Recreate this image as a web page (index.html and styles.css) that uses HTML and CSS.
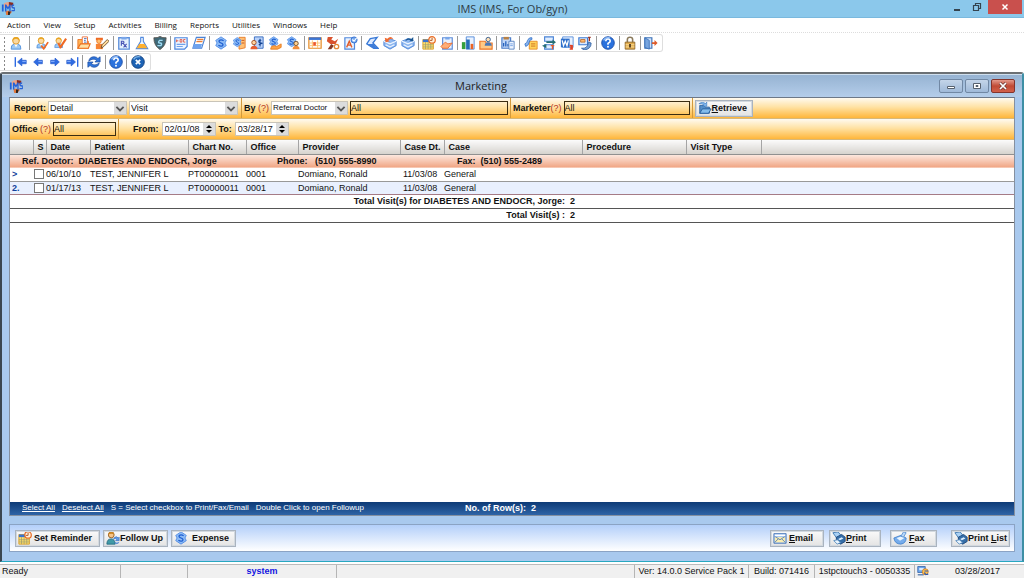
FILE: index.html
```html
<!DOCTYPE html>
<html lang="en">
<head>
<meta charset="utf-8">
<title>IMS (IMS, For Ob/gyn)</title>
<link rel="stylesheet" href="styles.css">
</head>
<body>
<svg class="sprite" aria-hidden="true">
  <symbol id="logo" viewBox="0 0 16 16"><path d="M3 3q5-4 10 0l-1 5q-4-2-8 0z" fill="#e9a58a"/><path d="M9 1l5 1v3h-5z" fill="#8a2d20"/><path d="M5 11h7v2l-3 3H6z" fill="#e0763a"/><path d="M8 12h3l-1 4H8z" fill="#30251e"/><path d="M1 4h2v8H1zM4.500 12V4h1.500l2 3 1.500-3H11v8H9.500V7.500L8 10 6.200 7.500V12z" fill="#2462d8"/><path d="M15 5q-2.500-1-2.500 1t2.500 2 0 3h-3" fill="none" stroke="#2462d8" stroke-width="1.500"/></symbol>
  <symbol id="person" viewBox="0 0 16 16"><path d="M2.500 15q-.5-5 3-5.500h5q3.500.5 3 5.500z" fill="#9cc9f5" stroke="#4f8fdc"/><path d="M6 9h4l-2 4z" fill="#fff"/><circle cx="8" cy="5.500" r="3.800" fill="#fbd9a0" stroke="#d39022"/><path d="M4 6q-.5-5 4-5t4 5q-1-3-4-3T4 6z" fill="#e9a420"/></symbol>
  <symbol id="person-check" viewBox="0 0 16 16"><use href="#person" width="14" height="15"/><path d="M7 11l3 3.500L15 7" fill="none" stroke="#ef6a25" stroke-width="2"/></symbol>
  <symbol id="person-edit" viewBox="0 0 16 16"><use href="#person" width="13" height="15"/><path d="M8 13.500L15 3M6 8l3 6" fill="none" stroke="#ef6a25" stroke-width="2.400"/></symbol>
  <symbol id="folder" viewBox="0 0 16 16"><path d="M1 4h5l1 2h6v8H1z" fill="#ffb455" stroke="#ea7120"/><path d="M6 1h6v8H6z" fill="#fff" stroke="#ec6b35"/><path d="M8 3h3M8 5h2M8 7h3" stroke="#3c66ae"/><path d="M4 9h11l-2 5H1z" fill="#ffe0a5" stroke="#ea7120" stroke-width="1.300"/></symbol>
  <symbol id="person-pencil" viewBox="0 0 16 16"><path d="M1 2h8v3H1z" fill="#ee6a25"/><circle cx="4.500" cy="6" r="2.500" fill="#ffc070" stroke="#ea7120"/><path d="M1 15V9h8v6z" fill="#f78435"/><path d="M7 14l1-4 6-6 2 2-6 6z" fill="#ffdc9c" stroke="#6c4a26"/></symbol>
  <symbol id="rx" viewBox="0 0 16 16"><path d="M2 2h12v13H2z" fill="#e5f0fd" stroke="#5d8fdb" stroke-width="1.500"/><path d="M5 1h6v3H5z" fill="#7aa7ea"/><path d="M5 11V6h2q2 1 0 2.500H5M7 8.500l4 4.500M11 9l-3.500 4" fill="none" stroke="#4a55b5" stroke-width="1.300"/></symbol>
  <symbol id="flask" viewBox="0 0 16 16"><path d="M6 1.500h4M6.500 2v4L1.500 14.500h13L9.500 6V2" fill="#eef6ff" stroke="#528ade" stroke-width="1.300"/><path d="M5 9h6l3 5H2z" fill="#ffb02e"/></symbol>
  <symbol id="shield" viewBox="0 0 16 16"><path d="M8 .5q3 2 7 1.500 0 9-7 13.500Q1 11 1 2q4 .5 7-1.500z" fill="#3e6877" stroke="#54504c"/><path d="M11 5H7.500Q5 8 8 8t1 3H5" fill="none" stroke="#9fdcf5" stroke-width="1.700"/></symbol>
  <symbol id="doc-text" viewBox="0 0 16 16"><path d="M1 2h14v10l-3 3H1z" fill="#eef5ff" stroke="#4c86df" stroke-width="1.400"/><path d="M3 4v3M3 5.500h2M7 4v3h2V4zM13 4h-2v3h2" fill="none" stroke="#df5340"/><path d="M3 9.500h10M3 12h7" stroke="#72a2ea" stroke-width="1.300"/></symbol>
  <symbol id="eraser" viewBox="0 0 16 16"><path d="M5 1.500h10L11 14H1z" fill="#fff" stroke="#4b83d5" stroke-width="1.300"/><path d="M6 4h7M5 6.500h7" stroke="#ea7f35" stroke-width="1.500"/><path d="M2 9h9.500L10 14H1z" fill="#6ea3ee"/></symbol>
  <symbol id="dollar" viewBox="0 0 16 16"><path d="M8 1l6 4-1.500 3L14 11l-6 4-6-4 1.500-3L2 5z" fill="#8ebcf6" stroke="#4a88e4"/><path d="M11 5.500Q8 3.500 6 5.200 5 7 8 8t2 2.800Q8 12.500 5 10.500" fill="none" stroke="#1f5fd0" stroke-width="1.500"/></symbol>
  <symbol id="dollar-note" viewBox="0 0 16 16"><path d="M8 1.500h7v12l-7 1.500z" fill="#ffc075" stroke="#e77a27"/><path d="M11 5h3M11 8h3" stroke="#c54f15"/><use href="#dollar" width="12" height="14"/></symbol>
  <symbol id="person-doc" viewBox="0 0 16 16"><path d="M5 1h10v13H5z" fill="#b9d2fa" stroke="#2f65bd"/><path d="M13 5q-3-1-3 1t3 2-3 2M11.500 3v9" fill="none" stroke="#164492" stroke-width="1.200"/><circle cx="4.500" cy="7.500" r="2.500" fill="#ffd4a0" stroke="#a1491d"/><path d="M.5 15q0-4 4-4t4 4z" fill="#e65e31"/></symbol>
  <symbol id="dollar-hand" viewBox="0 0 16 16"><use href="#dollar" width="13" height="13"/><path d="M4 12q3-2 6 0l5-3v4l-4 2H3z" fill="#ffa445" stroke="#e57c1f"/></symbol>
  <symbol id="dollar-person" viewBox="0 0 16 16"><use href="#dollar" width="13" height="13"/><circle cx="11.500" cy="8.500" r="2.500" fill="#ffcf8d" stroke="#664323"/><path d="M7.500 15q0-4 4-4t4 4z" fill="#ef8d3c"/></symbol>
  <symbol id="calendar" viewBox="0 0 16 16"><path d="M1 2h14v12H1z" fill="#fff" stroke="#e68b24" stroke-width="1.400"/><path d="M1 1.500h14v3H1z" fill="#3b74d3"/><path d="M2 8h12M2 11h12M5 5v9M11 5v9" stroke="#ffc06a"/><path d="M6 7h3v4H6z" fill="#ed562e"/></symbol>
  <symbol id="people-tool" viewBox="0 0 16 16"><path d="M2 1h6l-2 3 4 2 4-3-3 6H5L1 6z" fill="#d9522d"/><path d="M2 15l4-6 3 2-3 4z" fill="#863925"/><circle cx="12" cy="12" r="2.500" fill="#fff" stroke="#e38736" stroke-width="1.500"/></symbol>
  <symbol id="doc-a" viewBox="0 0 16 16"><path d="M1 2h11v13H1z" fill="#e9f2ff" stroke="#5188db" stroke-width="1.400"/><path d="M3 13l3-7 3 7M4 10.500h4" fill="none" stroke="#e15b27" stroke-width="1.500"/><circle cx="11.500" cy="4.500" r="3.500" fill="#75a8ed" stroke="#336fcf"/><path d="M9.500 4l2 2 3-4" fill="none" stroke="#fff" stroke-width="1.300"/></symbol>
  <symbol id="scanner" viewBox="0 0 16 16"><path d="M14 1.500L6 3 2 9l8 5h5L9 8z" fill="#dceaff" stroke="#3979d6" stroke-width="1.500"/><path d="M2 9h8l4 5h-4z" fill="#3d7cd9"/></symbol>
  <symbol id="box-in" viewBox="0 0 16 16"><path d="M1 6l7-3 7 3v5l-7 4-7-4z" fill="#8fb8f0" stroke="#4a84d8"/><path d="M1 6l7 3 7-3M3 10l5 2.500 5-2.500" fill="none" stroke="#eef5ff" stroke-width="1.400"/><path d="M2 2l1 5 5-1-2-1q3-3 6-1Q9-1 5 3z" fill="#f06a30"/></symbol>
  <symbol id="box-out" viewBox="0 0 16 16"><path d="M1 6l7-3 7 3v5l-7 4-7-4z" fill="#8fb8f0" stroke="#4a84d8"/><path d="M1 6l7 3 7-3M3 10l5 2.500 5-2.500" fill="none" stroke="#eef5ff" stroke-width="1.400"/><path d="M14 1v5H9l2-1Q8 3 5 6q1-5 7-3z" fill="#1b5794"/></symbol>
  <symbol id="reminder" viewBox="0 0 16 16"><path d="M1 4h12v11H1z" fill="#ffe06b" stroke="#d89b26"/><path d="M1 4h12v3H1z" fill="#3974d0"/><path d="M1 10h12M1 12.500h12M4 7v8M7 7v8M10 7v8" stroke="#9a9a70" stroke-width=".8"/><circle cx="11.500" cy="4.500" r="3.700" fill="#fff0da" stroke="#ea6b24" stroke-width="1.400"/><path d="M11.500 2v3H9" fill="none" stroke="#a94a18"/></symbol>
  <symbol id="clipboard-hand" viewBox="0 0 16 16"><path d="M3 2h11v13H3z" fill="#e8f1ff" stroke="#628fd8" stroke-width="1.400"/><path d="M6 1h5v3H6z" fill="#79a6e8"/><path d="M1 12l5-5 3 2 5-1-5 6H3z" fill="#ffae78" stroke="#ea6c2c"/></symbol>
  <symbol id="chart" viewBox="0 0 16 16"><path d="M6 1h9v14H6z" fill="#eaf2ff" stroke="#4d86d8"/><path d="M1 7h4v8H1z" fill="#35a03d"/><path d="M6 4h4v11H6z" fill="#246eb7"/><path d="M11 9h3v6h-3z" fill="#ea6428"/></symbol>
  <symbol id="folder-person" viewBox="0 0 16 16"><path d="M1 6h6l1 2h7v7H1z" fill="#ffc985" stroke="#eb7728" stroke-width="1.300"/><circle cx="10.500" cy="4" r="2.500" fill="#ffe0b7" stroke="#2b5588"/><path d="M6.500 11q0-4 4-4t4 4z" fill="#4b78b5"/></symbol>
  <symbol id="report" viewBox="0 0 16 16"><path d="M1 2h10v12H1z" fill="#c0d6f6" stroke="#4b7cc8" stroke-width="1.300"/><path d="M3 1h6v3H3z" fill="#b98145"/><path d="M3 12V8M5.500 12V6M8 12V9" stroke="#2561bd" stroke-width="1.500"/><path d="M9 6h6v9H9z" fill="#edf4ff" stroke="#527fbe"/><path d="M10.500 9h3M10.500 11h3" stroke="#6c9ce2"/></symbol>
  <symbol id="note-link" viewBox="0 0 16 16"><path d="M6 6h9v9H6z" fill="#ffd35b" stroke="#e68a22"/><path d="M8 9h5M8 11.500h5" stroke="#c96d1c"/><path d="M1 9q3-1 3-4Q6 1 9 2v2Q6 4 6 7t-4 5z" fill="#8cb7ef" stroke="#3975c9"/></symbol>
  <symbol id="transfer" viewBox="0 0 16 16"><path d="M3 1h10v5H3zM3 10h10v5H3z" fill="#e0edff" stroke="#4983d5" stroke-width="1.300"/><path d="M5 6h7V4l4 3-4 3V8H5zM5 9v5l-5-3z" fill="#266e72"/><path d="M12 11v4M10 11h4" stroke="#ec5b27" stroke-width="1.500"/></symbol>
  <symbol id="word" viewBox="0 0 16 16"><path d="M3 1h12v12H3z" fill="#e8f1ff" stroke="#558dda"/><path d="M1 3h10v10H1z" fill="#2f70cb"/><path d="M2.500 5L4 11l2-5 2 5 1.500-6" fill="none" stroke="#fff" stroke-width="1.500"/><path d="M11 11h3v4h-3M12.500 10v5" fill="none" stroke="#df4328" stroke-width="1.500"/></symbol>
  <symbol id="mail-doc" viewBox="0 0 16 16"><path d="M1 2h10v8H1z" fill="#d8e8ff" stroke="#3e7bd2" stroke-width="1.400"/><path d="M3 4h5v3H3z" fill="#ffba6d" stroke="#bc7032"/><path d="M4 14q7 1 8-7l3 1q0 7-8 8z" fill="#75a1d8" stroke="#3765a4"/><path d="M13 1v5M11.500 1.500h3" stroke="#9b3424" stroke-width="1.500"/></symbol>
  <symbol id="help" viewBox="0 0 16 16"><circle cx="8" cy="8" r="7.200" fill="#2b72dd" stroke="#1f4fa6"/><path d="M3 5q2-4 7-3" fill="none" stroke="#8dbcf8" stroke-width="1.500"/><path d="M5.500 6q0-2.500 2.500-2.500T10.500 6Q10.500 7 8 8.500V10" fill="none" stroke="#fff" stroke-width="1.800"/><circle cx="8" cy="12.200" r="1.100" fill="#fff"/></symbol>
  <symbol id="lock" viewBox="0 0 16 16"><path d="M5 8V4q0-2.500 3-2.500T11 4v4" fill="none" stroke="#8a7a5c" stroke-width="1.800"/><path d="M2.500 7h11v8h-11z" fill="#e3ad4e" stroke="#8c6528"/><path d="M3 10h10M3 12.500h10" stroke="#fbe1a0"/><path d="M8 9v4" stroke="#4b351a" stroke-width="2"/></symbol>
  <symbol id="exit" viewBox="0 0 16 16"><path d="M1 2h8v12H1z" fill="#cfe2fb" stroke="#3b70b7" stroke-width="1.300"/><path d="M1 2l5 3v10l-5-2z" fill="#77a5df" stroke="#3b70b7"/><path d="M9 7h3V4.500L15.500 8 12 11.500V9H9z" fill="#dd5a2a"/></symbol>
  <symbol id="arrow" viewBox="0 0 16 16"><path d="M3 8l5-4.500V6h5v4H8v2.500z" fill="#2e6be2" stroke="#2358c8" stroke-width=".7"/><path d="M8.500 7.500h4" stroke="#8fb6ff"/></symbol>
  <symbol id="arrow-end" viewBox="0 0 16 16"><path d="M1.500 2.500v11" stroke="#2e6be2" stroke-width="1.600"/><path d="M4 8l5-4.500V6h5v4H9v2.500z" fill="#2e6be2" stroke="#2358c8" stroke-width=".7"/><path d="M9.500 7.500h4" stroke="#8fb6ff"/></symbol>
  <symbol id="refresh" viewBox="0 0 16 16"><path d="M2 7q1-5 6-5 3 0 4.500 2L15 2v6H9l2-2Q7 3 2 7z" fill="#2f75dd" stroke="#1b4b9e" stroke-width=".8"/><path d="M14 9q-1 5-6 5-3 0-4.500-2L1 14V8h6l-2 2q4 3 9-1z" fill="#2f75dd" stroke="#1b4b9e" stroke-width=".8"/></symbol>
  <symbol id="close" viewBox="0 0 16 16"><circle cx="8" cy="8" r="7.200" fill="#1d63b5" stroke="#123f7c"/><path d="M3 5q2-3.500 7-3" fill="none" stroke="#7db6ea" stroke-width="1.500"/><path d="M5.500 5.500l5 5M10.500 5.500l-5 5" stroke="#fff" stroke-width="2"/></symbol>
  <symbol id="retrieve" viewBox="0 0 16 16"><path d="M2 5h5l1 2h5v7H2z" fill="#548fc9" stroke="#285f9d"/><path d="M5 9h10l-3 5H2z" fill="#84bdec" stroke="#285f9d"/><path d="M1 3q4-3 8 0l1-2v5H5l2-1.500Q4 2.500 1 3z" fill="#82b8ee" stroke="#3a78bd" stroke-width=".7"/></symbol>
  <symbol id="follow" viewBox="0 0 16 16"><circle cx="6" cy="4.500" r="3.300" fill="#f8c486" stroke="#8f5b22"/><path d="M2.500 4Q3 .5 6 .5T9.500 4Q6 2 2.500 4z" fill="#c98322"/><path d="M1 15q0-6 5-6 4 0 4.500 6z" fill="#3f9aa8" stroke="#266b85"/><path d="M9 8q3-3 5 0l1-1v4h-4l1.500-1.500Q11 8 9 9zM15 13q-3 3-5 0" fill="#5f9be8" stroke="#3d76c5" stroke-width=".8"/></symbol>
  <symbol id="email" viewBox="0 0 16 16"><path d="M1 3h14v11H1z" fill="#8fb8ee" stroke="#4a77b9"/><path d="M2 7h12v6H2z" fill="#fbeeb2"/><path d="M2 6l6 4 6-4M2 13l4-4M14 13l-4-4" fill="none" stroke="#547cae"/><path d="M2 4h12v2H2z" fill="#fff"/></symbol>
  <symbol id="printer" viewBox="0 0 16 16"><path d="M1 2l6-1 4 5-5 3z" fill="#a9d1f5" stroke="#3974ad"/><path d="M5 7l6-3 4 3v5l-5 3-5-3z" fill="#356ea8" stroke="#1d477b"/><path d="M7 9l4-2 2 1.500-4 2z" fill="#dceeff"/><path d="M2 11l4-1 4 3-4 2z" fill="#e8f5ff" stroke="#5288bd"/></symbol>
  <symbol id="fax" viewBox="0 0 16 16"><path d="M1 8l8-3 6 3q0 6-6 7-7 0-8-7z" fill="#75acec" stroke="#4482cb"/><path d="M4 8l6-2 3 2-5 3z" fill="#e9f5ff"/><path d="M9 6l3-5 3 1-3 5z" fill="#b9d9fa" stroke="#5a91d2"/></symbol>
  <symbol id="status" viewBox="0 0 16 16"><path d="M1 2h10v8H1z" fill="#6aa5ec" stroke="#305fa7"/><path d="M3 4h6v3H3z" fill="#d8ebff"/><path d="M1 12h8v2H1z" fill="#6587b5"/><circle cx="11" cy="9" r="4" fill="#ffc04d" stroke="#cb7a20"/><path d="M10 8h5M15 12q-4 2-5-2" fill="none" stroke="#2856b3" stroke-width="1.600"/></symbol>
</svg>

<header class="titlebar">
  <svg class="icon"><use href="#logo"/></svg>
  <h1 class="titlebar__text">IMS (IMS, For Ob/gyn)</h1>
  <div class="titlebar__controls">
    <button class="win-btn" aria-label="Minimize"><svg viewBox="0 0 10 10"><path d="M2 8h6" stroke="#34444f" stroke-width="2"/></svg></button>
    <button class="win-btn" aria-label="Restore"><svg viewBox="0 0 10 10"><path d="M1.500 3.500h5v5h-5zM3.500 3V1.500h5v5H7" fill="none" stroke="#34444f" stroke-width="1.200"/></svg></button>
    <button class="win-btn win-btn--close" aria-label="Close"><svg viewBox="0 0 10 10"><path d="M2.500 2.500l5 5M7.500 2.500l-5 5" stroke="#fff" stroke-width="1.500"/></svg></button>
  </div>
</header>

<nav class="menu">
  <a href="#">Action</a><a href="#">View</a><a href="#">Setup</a><a href="#">Activities</a><a href="#">Billing</a><a href="#">Reports</a><a href="#">Utilities</a><a href="#">Windows</a><a href="#">Help</a>
</nav>

<div class="toolbars">
  <div class="toolbar" role="toolbar" aria-label="Main">
    <div class="group group--first"><button aria-label="Patient"><svg class="icon"><use href="#person"/></svg></button></div>
    <div class="group group--wide"><button aria-label="Check in"><svg class="icon"><use href="#person-check"/></svg></button><button aria-label="Check out"><svg class="icon"><use href="#person-edit"/></svg></button></div>
    <div class="group group--mid"><button aria-label="Chart"><svg class="icon"><use href="#folder"/></svg></button><button aria-label="Notes"><svg class="icon"><use href="#person-pencil"/></svg></button></div>
    <div class="group"><button aria-label="Prescription"><svg class="icon"><use href="#rx"/></svg></button><button aria-label="Lab"><svg class="icon"><use href="#flask"/></svg></button><button aria-label="Immunization"><svg class="icon"><use href="#shield"/></svg></button></div>
    <div class="group"><button aria-label="Document"><svg class="icon"><use href="#doc-text"/></svg></button><button aria-label="Forms"><svg class="icon"><use href="#eraser"/></svg></button></div>
    <div class="group group--mid"><button aria-label="Billing"><svg class="icon"><use href="#dollar"/></svg></button><button aria-label="Claims"><svg class="icon"><use href="#dollar-note"/></svg></button><button aria-label="Statement"><svg class="icon"><use href="#person-doc"/></svg></button><button aria-label="Payment"><svg class="icon"><use href="#dollar-hand"/></svg></button><button aria-label="Account"><svg class="icon"><use href="#dollar-person"/></svg></button></div>
    <div class="group"><button aria-label="Schedule"><svg class="icon"><use href="#calendar"/></svg></button><button aria-label="Resources"><svg class="icon"><use href="#people-tool"/></svg></button><button aria-label="Authorization"><svg class="icon"><use href="#doc-a"/></svg></button></div>
    <div class="group"><button aria-label="Scan"><svg class="icon"><use href="#scanner"/></svg></button><button aria-label="Inbox"><svg class="icon"><use href="#box-in"/></svg></button><button aria-label="Outbox"><svg class="icon"><use href="#box-out"/></svg></button></div>
    <div class="group"><button aria-label="Reminder"><svg class="icon"><use href="#reminder"/></svg></button><button aria-label="Task"><svg class="icon"><use href="#clipboard-hand"/></svg></button></div>
    <div class="group"><button aria-label="Statistics"><svg class="icon"><use href="#chart"/></svg></button><button aria-label="Patient folder"><svg class="icon"><use href="#folder-person"/></svg></button></div>
    <div class="group group--mid"><button aria-label="Report"><svg class="icon"><use href="#report"/></svg></button></div>
    <div class="group group--mid"><button aria-label="Link note"><svg class="icon"><use href="#note-link"/></svg></button><button aria-label="Transfer"><svg class="icon"><use href="#transfer"/></svg></button><button aria-label="Word"><svg class="icon"><use href="#word"/></svg></button><button aria-label="Mail"><svg class="icon"><use href="#mail-doc"/></svg></button></div>
    <div class="group group--mid"><button aria-label="Help"><svg class="icon"><use href="#help"/></svg></button></div>
    <div class="group"><button aria-label="Lock"><svg class="icon"><use href="#lock"/></svg></button></div>
    <div class="group"><button aria-label="Exit"><svg class="icon"><use href="#exit"/></svg></button></div>
  </div>
  <div class="toolbar" role="toolbar" aria-label="Navigation">
    <div class="group group--nav"><button aria-label="First"><svg class="icon"><use href="#arrow-end"/></svg></button><button aria-label="Previous"><svg class="icon"><use href="#arrow"/></svg></button><button aria-label="Next"><svg class="icon flip"><use href="#arrow"/></svg></button><button aria-label="Last"><svg class="icon flip"><use href="#arrow-end"/></svg></button></div>
    <div class="group group--mid"><button aria-label="Refresh"><svg class="icon"><use href="#refresh"/></svg></button></div>
    <div class="group"><button aria-label="Help"><svg class="icon"><use href="#help"/></svg></button></div>
    <div class="group group--mid"><button aria-label="Close"><svg class="icon"><use href="#close"/></svg></button></div>
  </div>
</div>

<main class="window">
  <div class="window__title">
    <svg class="icon"><use href="#logo"/></svg>
    <h2 class="window__text">Marketing</h2>
    <div class="window__controls">
      <button class="mdi-btn" aria-label="Minimize"><svg viewBox="0 0 10 8"><path d="M1.500 4.500h7v2h-7z" fill="#fff" stroke="#56616e"/></svg></button>
      <button class="mdi-btn" aria-label="Maximize"><svg viewBox="0 0 10 8"><path d="M1.500 1.500h7v5h-7z" fill="#fff" stroke="#56616e"/><path d="M4 3.500h2v1H4z" stroke="#56616e"/></svg></button>
      <button class="mdi-btn mdi-btn--close" aria-label="Close"><svg viewBox="0 0 10 8"><path d="M2 1l6 6M8 1L2 7" stroke="#6b3a36" stroke-width="3"/><path d="M2 1l6 6M8 1L2 7" stroke="#fff" stroke-width="1.700"/></svg></button>
    </div>
  </div>

  <div class="sheet">
    <form class="filters">
      <div class="filters__row">
        <div class="field field--report">
          <label for="report">Report:</label>
          <span class="select select--report"><select id="report"><option>Detail</option></select><svg viewBox="0 0 10 10"><path d="M2 4l3 3 3-3" fill="none" stroke="#555" stroke-width="1.500"/></svg></span>
          <span class="select select--kind"><select aria-label="Report kind"><option>Visit</option></select><svg viewBox="0 0 10 10"><path d="M2 4l3 3 3-3" fill="none" stroke="#555" stroke-width="1.500"/></svg></span>
        </div>
        <div class="field">
          <label for="by">By <a class="hint" href="#">(?)</a></label>
          <span class="select select--by"><select id="by"><option>Referral Doctor</option></select><svg viewBox="0 0 10 10"><path d="M2 4l3 3 3-3" fill="none" stroke="#555" stroke-width="1.500"/></svg></span>
          <input class="lookup lookup--by" aria-label="Referral doctor" value="All">
        </div>
        <div class="field">
          <label for="marketer">Marketer<a class="hint" href="#">(?)</a></label>
          <input class="lookup lookup--marketer" id="marketer" value="All">
        </div>
        <div class="field">
          <button class="btn btn--retrieve" type="button"><svg class="icon"><use href="#retrieve"/></svg><span><u>R</u>etrieve</span></button>
        </div>
      </div>
      <div class="filters__row">
        <div class="field">
          <label for="office">Office <a class="hint" href="#">(?)</a></label>
          <input class="lookup lookup--office" id="office" value="All">
        </div>
        <div class="field field--dates">
          <label for="from">From:</label>
          <span class="spin"><input id="from" value="02/01/08"><span class="spin__btns"><button type="button" aria-label="Later"><svg viewBox="0 0 8 4"><path d="M1 4l3-3 3 3z"/></svg></button><button type="button" aria-label="Earlier"><svg viewBox="0 0 8 4"><path d="M1 0l3 3 3-3z"/></svg></button></span></span>
          <label for="to">To:</label>
          <span class="spin"><input id="to" value="03/28/17"><span class="spin__btns"><button type="button" aria-label="Later"><svg viewBox="0 0 8 4"><path d="M1 4l3-3 3 3z"/></svg></button><button type="button" aria-label="Earlier"><svg viewBox="0 0 8 4"><path d="M1 0l3 3 3-3z"/></svg></button></span></span>
        </div>
      </div>
    </form>

    <div class="grid">
      <table class="visits">
        <colgroup><col class="c-mark"><col class="c-sel"><col class="c-date"><col class="c-patient"><col class="c-chart"><col class="c-office"><col class="c-provider"><col class="c-casedt"><col class="c-case"><col class="c-procedure"><col class="c-type"><col></colgroup>
        <thead><tr><th></th><th>S</th><th>Date</th><th>Patient</th><th>Chart No.</th><th>Office</th><th>Provider</th><th>Case Dt.</th><th>Case</th><th>Procedure</th><th>Visit Type</th><th></th></tr></thead>
        <tbody>
          <tr class="doctor"><td colspan="12"><div class="doctor__line"><span>Ref. Doctor:&nbsp; DIABETES AND ENDOCR, Jorge</span><span>Phone:&nbsp;&nbsp; (510) 555-8990</span><span>Fax:&nbsp; (510) 555-2489</span></div></td></tr>
          <tr><td class="mark">&gt;</td><td><input type="checkbox" aria-label="Select visit 1"></td><td>06/10/10</td><td>TEST, JENNIFER L</td><td>PT00000011</td><td>0001</td><td>Domiano, Ronald</td><td class="casedt">11/03/08</td><td>General</td><td></td><td></td><td></td></tr>
          <tr class="alt"><td class="mark">2.</td><td><input type="checkbox" aria-label="Select visit 2"></td><td>01/17/13</td><td>TEST, JENNIFER L</td><td>PT00000011</td><td>0001</td><td>Domiano, Ronald</td><td class="casedt">11/03/08</td><td>General</td><td></td><td></td><td></td></tr>
        </tbody>
        <tfoot>
          <tr class="total"><td colspan="9">Total Visit(s) for DIABETES AND ENDOCR, Jorge:&nbsp; 2</td><td colspan="3"></td></tr>
          <tr class="total"><td colspan="9">Total Visit(s) :&nbsp; 2</td><td colspan="3"></td></tr>
        </tfoot>
      </table>
    </div>

    <div class="summary">
      <p class="summary__left"><a href="#">Select All</a><a href="#">Deselect All</a><span>S = Select checkbox to Print/Fax/Email</span><span>Double Click to open Followup</span></p>
      <p class="summary__count">No. of Row(s):&nbsp; 2</p>
    </div>
  </div>

  <div class="actions">
    <button class="btn btn--reminder"><svg class="icon"><use href="#reminder"/></svg><span>Set Reminder</span></button>
    <button class="btn btn--follow"><svg class="icon"><use href="#follow"/></svg><span>Follow Up</span></button>
    <button class="btn btn--expense"><svg class="icon"><use href="#dollar"/></svg><span>Expense</span></button>
    <div class="actions__right">
      <button class="btn btn--email"><svg class="icon"><use href="#email"/></svg><span><u>E</u>mail</span></button>
      <button class="btn btn--print"><svg class="icon"><use href="#printer"/></svg><span><u>P</u>rint</span></button>
      <button class="btn btn--fax"><svg class="icon"><use href="#fax"/></svg><span><u>F</u>ax</span></button>
      <button class="btn btn--list"><svg class="icon"><use href="#printer"/></svg><span>Print <u>L</u>ist</span></button>
    </div>
  </div>
</main>

<footer class="status">
  <span class="status__ready">Ready</span><span class="status__blank"></span><span class="status__user">system</span><span class="status__fill"></span><span class="status__ver">Ver: 14.0.0 Service Pack 1</span><span class="status__build">Build: 071416</span><span class="status__host">1stpctouch3 - 0050335</span><span class="status__icon"><svg class="icon"><use href="#status"/></svg></span><span class="status__date">03/28/2017</span>
</footer>
</body>
</html>
```
FILE: styles.css
```css
:root {
  --text: 9px/12px "Liberation Sans", sans-serif;
  --small: 8px/12px "Liberation Sans", sans-serif;
  --bold: bold 9px/12px "Liberation Sans", sans-serif;
  --menu: 8px/14px "Open Sans", sans-serif;
}

* { box-sizing: border-box; }

body {
  display: flex;
  flex-direction: column;
  min-height: 100vh;
  margin: 0;
  background: #fff;
  color: #111;
  font: var(--text);
}

button, input, select { margin: 0; padding: 0; border: 0; border-radius: 0; background: none; color: inherit; font: inherit; }
h1, h2, p { margin: 0; font-weight: normal; }
a { color: inherit; }
.sprite { position: absolute; width: 0; height: 0; }
.icon { display: block; flex: none; width: 14px; height: 14px; }
.flip { transform: scaleX(-1); }

.titlebar {
  display: grid;
  grid-template-columns: 1fr auto 1fr;
  height: 18px;
  padding-left: 1px;
  background: #8bc8eb;
  border-bottom: 1px solid #7ab9de;
}
.titlebar .icon { margin-top: 1px; }
.titlebar__text { font: 11px/18px "Open Sans", sans-serif; color: #2d3b45; }
.titlebar__controls { display: flex; justify-content: flex-end; align-items: flex-start; padding-right: 2px; }
.win-btn { display: grid; place-items: center; width: 20px; height: 14px; }
.win-btn svg { width: 10px; height: 10px; }
.win-btn--close { width: 34px; margin-left: 1px; background: #c9504d; }

.menu {
  display: flex;
  gap: 13px;
  height: 15px;
  padding-left: 7px;
  border-bottom: 1px dotted #ddd;
  font: var(--menu);
}
.menu a { color: #111; text-decoration: none; }

.toolbars { display: flex; flex-direction: column; align-items: flex-start; gap: 1px; padding: 1px 0; }
.toolbar {
  display: flex;
  align-items: center;
  height: 18px;
  padding: 0 1px 0 9px;
  border: 1px solid #dedede;
  border-left: 0;
  border-radius: 0 3px 3px 0;
  background: linear-gradient(#888 2px, transparent 2px) 4px 2px / 1px 4px repeat-y;
}
.group { display: flex; align-items: center; gap: 4px; padding: 0 3px; border-left: 1px solid #999; }
.group--first { padding: 0 6px 0 0; border-left: 0; }
.group--wide { padding: 0 5px; }
.group--mid { padding: 0 4px; }
.group--nav { padding: 0 3px 0 5px; gap: 3px; border-left: 0; }

.window {
  flex: 1;
  display: flex;
  flex-direction: column;
  padding: 0 7px 9px;
  border: solid #3b4650;
  border-width: 2px 2px 1px 2px;
  border-top-color: #6b7074;
  border-right-color: #3e8fa5;
  border-bottom-color: #28a8c0;
  border-radius: 3px 3px 0 0;
  background: #a9c9ee;
}
.window__title {
  display: flex;
  align-items: center;
  height: 23px;
  margin: 0 -7px;
  padding: 0 7px;
  border-top: 1px solid #cfdfee;
  background: linear-gradient(#96b3d2, #b4cdea);
}
.window__text { flex: 1; font: 11px/22px "Open Sans", sans-serif; color: #222; text-align: center; }
.window__controls { display: flex; gap: 2px; }
.mdi-btn { display: grid; place-items: center; width: 24px; height: 14px; border: 1px solid #7188a4; border-radius: 2px; background: linear-gradient(#c4d5e9, #9fb9d8); }
.mdi-btn svg { width: 10px; height: 8px; }
.mdi-btn--close { border-color: #84342c; background: linear-gradient(#e39a8c, #c04a35 50%, #d2604a); }

.sheet { flex: 1; display: flex; flex-direction: column; border: 1px solid #8590a0; border-top-color: #6d7887; }

.filters { font: var(--bold); }
.filters__row {
  display: flex;
  height: 21px;
  border-bottom: 1px solid #d8b878;
  background: linear-gradient(#fffaf0, #ffe2a4 45%, #ffb63a);
}
.field { display: flex; align-items: center; gap: 2px; padding: 0 2px; border-right: 1px solid #d39a3c; }
.field:last-child { border-right: 0; }
.field--report { padding-left: 4px; padding-right: 3px; }
.field--dates { gap: 3px; padding-left: 14px; }
.hint { color: #b3321f; font: var(--text); text-decoration: none; }

.select { display: grid; grid-template-columns: 1fr 12px; height: 14px; border: 1px solid #c9c4b8; background: #fff; }
.select select { grid-area: 1 / 1 / 2 / 3; width: 100%; padding-left: 1px; appearance: none; font: var(--text); }
.select svg { grid-area: 1 / 2; width: 12px; height: 12px; background: #dcdcdc; pointer-events: none; }
.select--report { width: 79px; }
.select--kind { width: 109px; }
.select--by { width: 77px; }
.select--by select { font: var(--small); }

.lookup { height: 14px; border: 1px solid #3b2d12; font: var(--text); }
.lookup--by { width: 158px; }
.lookup--marketer { width: 126px; }
.lookup--office { width: 63px; }

.spin { display: flex; height: 14px; border: 1px solid #c9c4b8; background: #fff; }
.spin input { width: 40px; padding-left: 2px; font: var(--text); }
.spin__btns { display: flex; flex-direction: column; width: 12px; background: #dcdcdc; }
.spin__btns button { display: grid; place-items: center; height: 6px; }
.spin__btns svg { width: 8px; height: 4px; }

.btn {
  display: flex;
  align-items: center;
  gap: 2px;
  height: 17px;
  padding: 0 2px;
  border: 1px solid #a9b3bf;
  outline: 1px solid #d3d9df;
  outline-offset: -2px;
  background: linear-gradient(#fafafa, #e3e3e3);
  font: var(--bold);
  white-space: nowrap;
}
.btn--retrieve { width: 58px; gap: 0; }
.btn--reminder { width: 85px; }
.btn--follow { width: 65px; gap: 0; }
.btn--expense { width: 65px; }
.btn--email { width: 54px; }
.btn--print { width: 52px; gap: 0; }
.btn--fax { width: 47px; margin: 0 9px 0 4px; }
.btn--list { width: 59px; gap: 0; }
.btn--expense { gap: 4px; }

.grid { flex: 1; background: #fff; }
.visits { width: 100%; border-collapse: collapse; table-layout: fixed; }
.visits th, .visits td { padding: 0; text-align: left; white-space: nowrap; }
.visits th {
  height: 14px;
  padding-left: 4px;
  border-right: 1px solid #a5a5a5;
  border-bottom: 1px solid #909090;
  background: linear-gradient(#fbfbfb, #d6d3ce);
  font: var(--bold);
}
.visits th:last-child { border-right: 0; }
.visits td { height: 13px; border-bottom: 1px solid #999; }
.visits .alt td { background: #e9f0fe; border-bottom-color: #a57b86; }
.visits .casedt { padding-left: 3px; }
.visits .mark { padding-left: 2px; color: #12429c; font: var(--bold); }
.visits .doctor td { height: 14px; border-bottom: 0; background: linear-gradient(#fdeae2, #f0a482); font: var(--bold); }
.doctor__line { display: grid; grid-template-columns: 255px 180px 1fr; padding-left: 12px; }
.visits .total td { height: 14px; padding-right: 7px; border-bottom-color: #555; font: var(--bold); text-align: right; }
.visits input { display: block; width: 10px; height: 10px; margin-left: 1px; border: 1px solid #777; background: #fff; appearance: none; }
.c-mark { width: 23px; }
.c-sel { width: 13px; }
.c-date { width: 44px; }
.c-patient { width: 98px; }
.c-chart { width: 58px; }
.c-office { width: 52px; }
.c-provider { width: 102px; }
.c-casedt { width: 44px; }
.c-case { width: 138px; }
.c-procedure { width: 104px; }
.c-type { width: 75px; }

.summary { display: grid; grid-template-columns: 455px 1fr; height: 13px; background: linear-gradient(#0d3a76, #2f64a6); color: #fff; }
.summary__left { display: flex; gap: 7px; padding-left: 12px; font: var(--small); }
.summary__count { font: var(--bold); }

.actions {
  display: flex;
  align-items: center;
  gap: 3px;
  height: 28px;
  margin-top: 8px;
  padding: 0 4px 0 5px;
  border: 1px solid #8ba3c4;
  background: linear-gradient(#b3cffa, #fff);
}
.actions__right { display: flex; gap: 5px; margin-left: auto; }

.status { display: flex; height: 14px; border-top: 1px solid #bbb; margin-top: 2px; background: #f0f0f0; line-height: 13px; }
.status span { border-right: 1px solid #b5b5b5; white-space: nowrap; text-align: center; }
.status .status__ready { width: 121px; padding-left: 2px; text-align: left; }
.status__blank { width: 67px; }
.status .status__user { width: 149px; color: #1414e0; font: var(--bold); }
.status__fill { flex: 1; }
.status__ver { width: 114px; }
.status__build { width: 66px; }
.status__host { width: 100px; }
.status .status__icon { width: 16px; padding-left: 1px; border: 0; }
.status__icon .icon { height: 12px; }
.status .status__date { width: 93px; border: 0; }
```
